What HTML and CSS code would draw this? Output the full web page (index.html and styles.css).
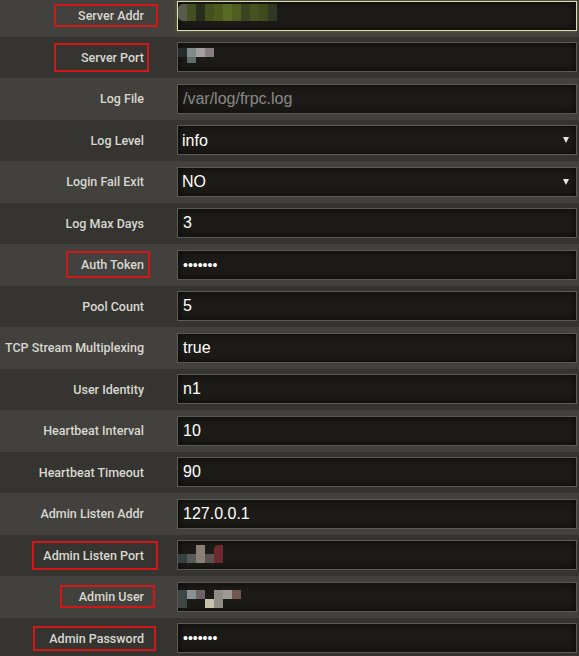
FILE: index.html
```html
<!DOCTYPE html>
<html>
<head>
  <title>frpc settings</title>
  <link rel="stylesheet" href="styles.css">
</head>
<body>
  <div class="form">
    <div class="row">
      <label class="label"><span class="mark mark-addr">Server Addr</span></label>
      <div class="field focused">
        <div class="mosaic mosaic-addr">
          <span></span><span></span><span></span><span></span><span></span><span></span><span></span><span></span><span></span><span></span><span></span>
        </div>
      </div>
    </div>
    <div class="row">
      <label class="label"><span class="mark mark-port">Server Port</span></label>
      <div class="field">
        <div class="mosaic mosaic-port">
          <span></span><span></span><span></span><span></span><span></span>
        </div>
      </div>
    </div>
    <div class="row">
      <label class="label">Log File</label>
      <input class="input" type="text" placeholder="/var/log/frpc.log">
    </div>
    <div class="row">
      <label class="label">Log Level</label>
      <div class="select-wrap">
        <select class="input">
          <option>info</option>
          <option>debug</option>
          <option>warn</option>
        </select>
      </div>
    </div>
    <div class="row">
      <label class="label">Login Fail Exit</label>
      <div class="select-wrap">
        <select class="input">
          <option>NO</option>
          <option>YES</option>
        </select>
      </div>
    </div>
    <div class="row">
      <label class="label">Log Max Days</label>
      <input class="input" type="text" value="3">
    </div>
    <div class="row">
      <label class="label"><span class="mark mark-token">Auth Token</span></label>
      <input class="input password" type="password" value="1234567">
    </div>
    <div class="row">
      <label class="label">Pool Count</label>
      <input class="input" type="text" value="5">
    </div>
    <div class="row">
      <label class="label">TCP Stream Multiplexing</label>
      <input class="input" type="text" value="true">
    </div>
    <div class="row">
      <label class="label">User Identity</label>
      <input class="input" type="text" value="n1">
    </div>
    <div class="row">
      <label class="label">Heartbeat Interval</label>
      <input class="input" type="text" value="10">
    </div>
    <div class="row">
      <label class="label">Heartbeat Timeout</label>
      <input class="input" type="text" value="90">
    </div>
    <div class="row">
      <label class="label">Admin Listen Addr</label>
      <input class="input" type="text" value="127.0.0.1">
    </div>
    <div class="row">
      <label class="label"><span class="mark mark-lport">Admin Listen Port</span></label>
      <div class="field">
        <div class="mosaic mosaic-lport">
          <span></span><span></span><span></span><span></span><span></span>
        </div>
      </div>
    </div>
    <div class="row">
      <label class="label"><span class="mark mark-user">Admin User</span></label>
      <div class="field">
        <div class="mosaic mosaic-user">
          <span></span><span></span><span></span><span></span><span></span><span></span><span></span>
        </div>
      </div>
    </div>
    <div class="row">
      <label class="label"><span class="mark mark-pass">Admin Password</span></label>
      <input class="input password" type="password" value="1234567">
    </div>
  </div>
</body>
</html>
```

FILE: styles.css
```css
body {
  margin: 0;
  background-color: #353431;
  font-family: "Liberation Sans", Arial, sans-serif;
  overflow: hidden;
}

.form {
  margin-top: -5px;
}

.row {
  display: grid;
  grid-template-columns: 177px 400px;
  align-items: center;
  height: 41.53px;
  background-color: #353431;
}

.row:nth-child(odd) {
  background-color: #42413d;
}

.label {
  text-align: right;
  padding-right: 33px;
  font-family: Roboto, "Noto Sans", sans-serif;
  font-size: 12.5px;
  font-weight: 500;
  line-height: 15px;
  color: #d8d8d0;
  white-space: nowrap;
}

/* red annotation boxes */
.mark {
  display: inline-block;
  border: 2px solid #d01818;
  padding: 2px 12px 2px 22px;
  margin-right: -14px;
}

.mark-port {
  padding: 5px 3px 5px 25px;
  margin-right: -5px;
}

.mark-token {
  padding: 4px 4px 4px 13px;
  margin-right: -6px;
}

.mark-lport {
  padding: 5px 12px 5px 9px;
  margin-right: -14px;
}

.mark-user {
  padding: 2px 9px 2px 17px;
  margin-right: -11px;
}

.mark-pass {
  padding: 3px 10px 3px 14px;
  margin-right: -12px;
}

.input,
.field {
  box-sizing: border-box;
  width: 400px;
  height: 30px;
  margin: 0;
  padding: 0 5px;
  border: 1px solid #5b5a55;
  background-color: #1c1b18;
  box-shadow: inset 0 0 8px rgba(0, 0, 0, 0.7);
  color: #ffffff;
  font-family: "Liberation Sans", Arial, sans-serif;
  font-size: 16px;
  outline: none;
  border-radius: 0;
}

.input::placeholder {
  color: #8a8984;
}

.password {
  font-size: 14px;
  letter-spacing: 0;
}

.field {
  display: flex;
  align-items: center;
  padding: 0;
}

.focused {
  border-color: #dcdcbc;
  box-shadow: 0 0 3px #6f7a3c, inset 0 0 8px rgba(0, 0, 0, 0.7);
}

.select-wrap {
  position: relative;
  width: 400px;
}

.select-wrap select {
  appearance: none;
  -webkit-appearance: none;
  padding-left: 4px;
}

.select-wrap::after {
  content: "";
  position: absolute;
  right: 8px;
  top: 12px;
  border-left: 3px solid transparent;
  border-right: 3px solid transparent;
  border-top: 6px solid #e8e8e8;
  pointer-events: none;
}

/* pixelated redactions */
.mosaic {
  display: grid;
  grid-auto-flow: column;
  grid-auto-columns: 9px;
  grid-template-rows: 9px 9px;
}

.mosaic span {
  display: block;
}

.mosaic-addr {
  grid-template-rows: 17px;
  margin-top: -7px;
}

.mosaic-addr span:nth-child(1) { background: #585a4c; border-radius: 5px 0 0 5px; }
.mosaic-addr span:nth-child(2) { background: #445022; }
.mosaic-addr span:nth-child(3) { background: #2a2d1e; }
.mosaic-addr span:nth-child(4) { background: #44501e; }
.mosaic-addr span:nth-child(5) { background: #4d5c1e; }
.mosaic-addr span:nth-child(6) { background: #596a26; }
.mosaic-addr span:nth-child(7) { background: #4f5e20; }
.mosaic-addr span:nth-child(8) { background: #3a4420; }
.mosaic-addr span:nth-child(9) { background: #46531f; }
.mosaic-addr span:nth-child(10) { background: #3f4a1e; }
.mosaic-addr span:nth-child(11) { background: #303722; }

.mosaic-port {
  margin-top: -4px;
  grid-template-rows: 9px 6px;
}

.mosaic-port span:nth-child(1) { background: #262c2c; grid-row: 1; }
.mosaic-port span:nth-child(2) { background: #828a8a; grid-row: 1; }
.mosaic-port span:nth-child(3) { background: #5e6e68; grid-row: 2; grid-column: 2; }
.mosaic-port span:nth-child(4) { background: #a49ea0; grid-row: 1; }
.mosaic-port span:nth-child(5) { background: #857f82; grid-row: 1; }

.mosaic-lport {
  margin-top: -2px;
  grid-template-rows: 9px 9px;
}

.mosaic-lport span:nth-child(1) { background: #364040; grid-row: 2; grid-column: 1; }
.mosaic-lport span:nth-child(2) { background: #585a58; grid-row: 2; grid-column: 2; }
.mosaic-lport span:nth-child(3) { background: #8a8078; grid-row: 1 / 3; grid-column: 3; }
.mosaic-lport span:nth-child(4) { background: #5c5250; grid-row: 2; grid-column: 4; }
.mosaic-lport span:nth-child(5) { background: #6a2a2e; grid-row: 1 / 3; grid-column: 5; border-radius: 4px 0 0 0; }

.mosaic-user {
  margin-top: 5px;
  grid-template-rows: 9px 9px;
}

.mosaic-user span:nth-child(1) { background: #3e4646; grid-row: 1 / 3; grid-column: 1; }
.mosaic-user span:nth-child(2) { background: #8a9294; grid-row: 1; grid-column: 2; }
.mosaic-user span:nth-child(3) { background: #6e6468; grid-row: 1; grid-column: 3; }
.mosaic-user span:nth-child(4) { background: #c6c2ac; grid-row: 2; grid-column: 4; }
.mosaic-user span:nth-child(5) { background: #8e8e84; grid-row: 1 / 3; grid-column: 5; }
.mosaic-user span:nth-child(6) { background: #9c9c94; grid-row: 1; grid-column: 6; }
.mosaic-user span:nth-child(7) { background: #72584e; grid-row: 1; grid-column: 7; }
```
